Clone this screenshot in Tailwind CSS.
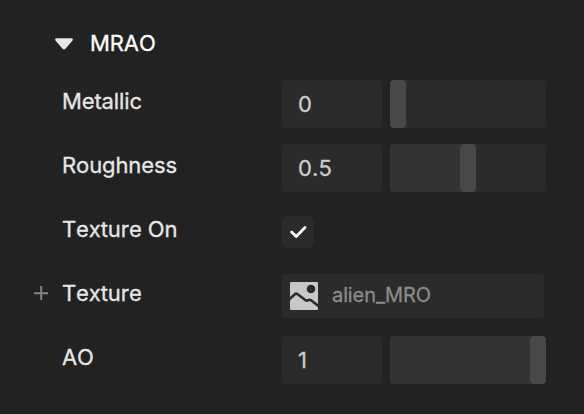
<!DOCTYPE html>
<html lang="en">

<head>
    <meta charset="UTF-8">
    <meta name="viewport" content="width=device-width, initial-scale=1.0">
    <script src="https://cdn.jsdelivr.net/npm/@tailwindcss/browser@4"></script>
    <title>MRAO</title>
</head>

<body class="bg-[#222222]">
    <div class="h-[414px] w-[584px] overflow-hidden flex flex-col font-['Inter',sans-serif] text-[22px] leading-7 tracking-[-0.1px] [font-kerning:none] [-webkit-text-stroke:0.3px] text-[#e6e6e6]">
        <!-- section header -->
        <div class="flex items-center h-[72px] pl-[55px] pb-0.5 pt-4">
            <div class="flex items-center h-full pb-[1px]">
                <svg class="w-[18px] h-3 mr-[17px] mt-0.5" viewBox="0 0 18 12" fill="#e6e6e6">
                    <path d="M1.6 0.3H16.4C17.8 0.3 18.3 1.8 17.4 2.8L10.4 10.7C9.6 11.6 8.4 11.6 7.6 10.7L0.6 2.8C-0.3 1.8 0.2 0.3 1.6 0.3Z" />
                </svg>
                <span class="text-white">MRAO</span>
            </div>
        </div>

        <!-- metallic -->
        <div class="flex items-center h-16 pl-[62px]">
            <div class="w-[220px] pb-1.5">Metallic</div>
            <div class="flex items-center w-[100px] h-12 pl-4 rounded bg-[#2b2b2b] text-[#cccccc]">0</div>
            <div class="flex ml-2 w-[156px] h-12 rounded bg-[#2b2b2b]">
                <div class="w-4 h-12 rounded bg-[#484848]"></div>
            </div>
        </div>

        <!-- roughness -->
        <div class="flex items-center h-16 pl-[62px]">
            <div class="w-[220px] pb-1.5">Roughness</div>
            <div class="flex items-center w-[100px] h-12 pl-4 rounded bg-[#2b2b2b] text-[#cccccc] tracking-[0.2px]">0.5</div>
            <div class="flex ml-2 w-[156px] h-12 rounded bg-[#2b2b2b]">
                <div class="w-[70px] h-12 rounded-l bg-[#333333]"></div>
                <div class="w-4 h-12 rounded bg-[#484848]"></div>
            </div>
        </div>

        <!-- texture on -->
        <div class="flex items-center h-16 pl-[62px]">
            <div class="w-[220px] pb-1.5">Texture On</div>
            <div class="flex items-center justify-center size-8 rounded-md bg-[#2b2b2b]">
                <svg class="size-8" viewBox="0 0 32 32" fill="none" stroke="#ffffff" stroke-width="2.8" stroke-linecap="round" stroke-linejoin="round">
                    <path d="M9.6 16.1L14.2 20.4L23 11.5" />
                </svg>
            </div>
        </div>

        <!-- texture -->
        <div class="flex items-center h-16 pl-[33px]">
            <svg class="w-4 h-4 mr-[13px] mb-1.5" viewBox="0 0 16 16" fill="none" stroke="#858585" stroke-width="2">
                <path d="M8.2 1V15M1 8.3H15" />
            </svg>
            <div class="w-[220px] pb-1.5">Texture</div>
            <div class="flex items-center w-[262px] h-11 pl-2 rounded-xs bg-[#2b2b2b]">
                <svg class="size-7" viewBox="0 0 28 28">
                    <rect width="28" height="28" rx="1" fill="#c8c8c8" />
                    <circle cx="21" cy="7" r="4.3" fill="#2b2b2b" />
                    <path d="M-1 17.6L4.8 12.2Q6 11 7.3 12L15.6 18.2Q16.5 18.9 17.5 18.5L18.8 18Q20 17.5 21 18.3L29 24.5" fill="none" stroke="#2b2b2b" stroke-width="2.6" stroke-linejoin="round" />
                </svg>
                <span class="ml-3.5 pb-0.5 text-[20px] text-[#8c8c8c]">alien_MRO</span>
            </div>
        </div>

        <!-- ao -->
        <div class="flex items-center h-16 pl-[62px]">
            <div class="w-[220px] pb-1.5">AO</div>
            <div class="flex items-center w-[100px] h-12 pl-4 rounded bg-[#2b2b2b] text-[#cccccc]">1</div>
            <div class="flex ml-2 w-[156px] h-12 rounded bg-[#2b2b2b]">
                <div class="w-[140px] h-12 rounded-l bg-[#333333]"></div>
                <div class="w-4 h-12 rounded bg-[#484848]"></div>
            </div>
        </div>

        <div class="mt-auto h-[3px] bg-[#202020]"></div>
    </div>
</body>

</html>
